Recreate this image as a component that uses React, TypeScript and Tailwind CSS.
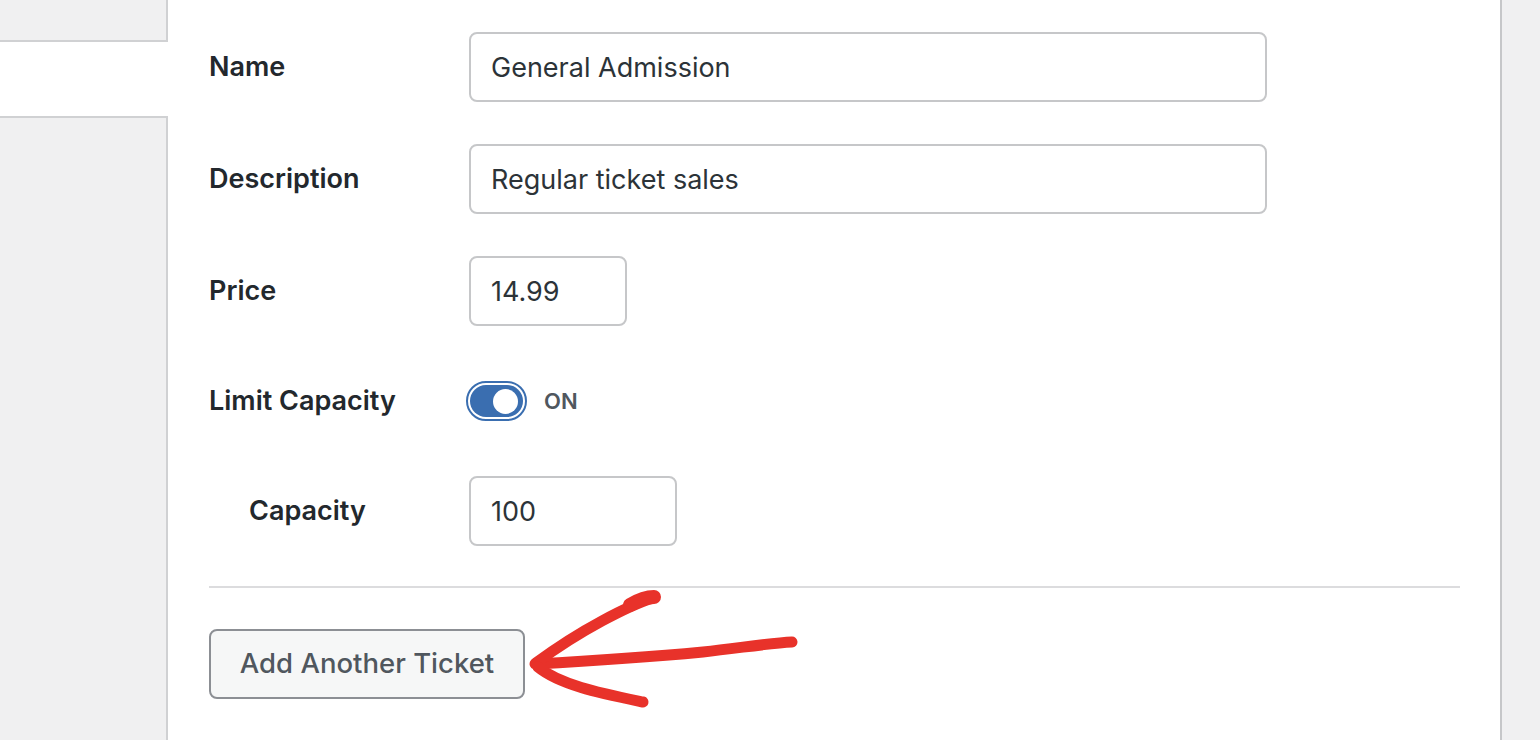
import React from 'react';

const font = { fontFamily: 'Inter, "Noto Sans", sans-serif' };

function Field({ label, value, width, indent }: { label: string; value: string; width: string; indent?: boolean }) {
  return (
    <div className="flex items-center h-[70px]">
      <label className={`w-[260px] shrink-0 text-[27px] font-semibold text-[#23282d] ${indent ? 'pl-[40px]' : ''}`}>
        {label}
      </label>
      <input
        readOnly
        value={value}
        className={`${width} h-[70px] rounded-[8px] border-2 border-[#c6c7c9] bg-white px-[20px] text-[27px] text-[#2c3338] outline-none`}
        style={font}
      />
    </div>
  );
}

function Toggle() {
  return (
    <div className="flex items-center gap-[17px] -ml-[3px]">
      <div className="w-[61px] h-[40px] rounded-full border-2 border-[#3a6eb0] p-[2px]">
        <div className="w-full h-full rounded-full bg-[#3a6eb0] flex items-center justify-end pr-[5px]">
          <div className="w-[25px] h-[25px] rounded-full bg-white" />
        </div>
      </div>
      <span className="text-[22px] font-semibold text-[#50575e]">ON</span>
    </div>
  );
}

function Arrow() {
  return (
    <svg
      className="absolute left-[520px] top-[585px] pointer-events-none"
      width="290"
      height="130"
      viewBox="0 0 290 130"
      fill="none"
      stroke="#e8322a"
      strokeLinecap="round"
      strokeLinejoin="round"
    >
      <path d="M15 79 C70 76 130 72 183 67 C220 63 250 58 272 57" strokeWidth="11" />
      <path d="M133 13 C110 20 60 45 16 78" strokeWidth="11" />
      <path d="M110 20 C120 14 128 12 134 12" strokeWidth="14" />
      <path d="M18 82 C40 100 80 108 123 117" strokeWidth="11" />
    </svg>
  );
}

export default function App() {
  return (
    <div className="relative flex w-[1540px] h-[740px] overflow-hidden bg-[#f0f0f1]" style={font}>
      <div className="w-[168px] shrink-0 flex flex-col">
        <div className="h-[42px] border-b-2 border-r-2 border-[#d0d1d3] bg-[#f0f0f1]" />
        <div className="h-[74px] bg-white" />
        <div className="flex-1 border-t-2 border-r-2 border-[#d0d1d3] bg-[#f0f0f1]" />
      </div>

      <div className="w-[1334px] shrink-0 bg-white border-r-2 border-[#c6c7c9] pl-[41px] pr-[40px] pt-[32px]">
        <div className="flex flex-col gap-[42px]">
          <Field label="Name" value="General Admission" width="w-[798px]" />
          <Field label="Description" value="Regular ticket sales" width="w-[798px]" />
          <Field label="Price" value="14.99" width="w-[158px]" />
        </div>

        <div className="flex items-center h-[70px] mt-[40px]">
          <label className="w-[260px] shrink-0 text-[27px] font-semibold text-[#23282d]">Limit Capacity</label>
          <Toggle />
        </div>

        <div className="mt-[40px]">
          <Field label="Capacity" value="100" width="w-[208px]" indent />
        </div>

        <hr className="mt-[40px] border-t-2 border-[#dcdcde]" />

        <button
          className="mt-[41px] h-[70px] w-[316px] rounded-[8px] border-2 border-[#8c8f94] bg-[#f6f7f7] text-[27.5px] font-medium text-[#50575e]"
          style={font}
        >
          Add Another Ticket
        </button>
      </div>

      <Arrow />
    </div>
  );
}
